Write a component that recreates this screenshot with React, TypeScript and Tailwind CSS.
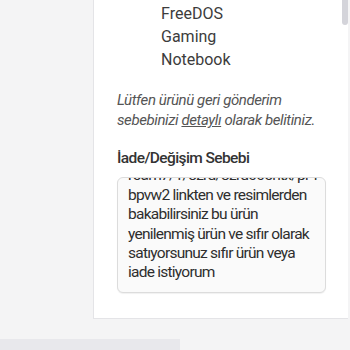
export default function App() {
  const specs = ["FreeDOS", "Gaming", "Notebook"];
  const reasonLines = [
    "r5am7/1/8zrd/8zrd005ntx/pr4",
    "bpvw2 linkten ve resimlerden",
    "bakabilirsiniz bu ürün",
    "yenilenmiş ürün ve sıfır olarak",
    "satıyorsunuz sıfır ürün veya",
    "iade istiyorum",
  ];

  return (
    <div
      className="relative w-[350px] h-[350px] overflow-hidden bg-[#f4f4f5]"
      style={{ fontFamily: "Roboto, 'Noto Sans', sans-serif" }}
    >
      <div className="flex">
        <div className="w-[93px] shrink-0" />
        <div className="w-[255px] shrink-0 bg-white border-l border-b border-[#e4e4e7] pt-[2px] pb-[25px]">
          <ul className="pl-[67px] text-[16px] leading-[23px] text-[#3c3c3c]">
            {specs.map((s) => (
              <li key={s}>{s}</li>
            ))}
          </ul>

          <p className="mt-[19px] pl-[23px] text-[15px] leading-[20px] italic tracking-[-0.4px] text-[#555]">
            Lütfen ürünü geri gönderim
            <br />
            sebebinizi <span className="underline">detaylı</span> olarak belitiniz.
          </p>

          <div className="mt-[18px] pl-[23px] text-[15.5px] leading-[20px] font-medium tracking-[-0.6px] text-[#333]">
            İade/Değişim Sebebi
          </div>

          <div className="mt-[9px] ml-[23px] w-[209px] h-[116px] overflow-hidden rounded-[6px] border border-[#dcdcdc] bg-[#fafafa] pl-[10px] shadow-[0_1px_1px_rgba(0,0,0,0.06)]">
            <div className="-mt-[11.7px] text-[15.5px] leading-[19.4px] tracking-[-0.75px] text-[#2e2e2e]">
              {reasonLines.map((l) => (
                <div key={l} className="whitespace-nowrap">
                  {l}
                </div>
              ))}
            </div>
          </div>
        </div>
      </div>

      <div className="mt-[20px] w-[180px] h-[14px] bg-[#e8e8ec]" />

      <div className="absolute right-[2px] top-0 w-[6px] h-[25px] rounded-b-[3px] bg-[#d4d4da]" />
    </div>
  );
}
